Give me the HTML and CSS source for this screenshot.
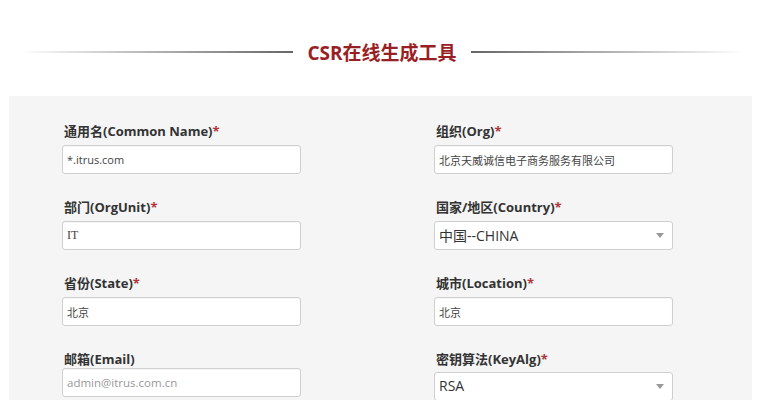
FILE: index.html
```html
<!DOCTYPE html>
<html lang="zh-CN">
<head>
<meta charset="utf-8">
<title>CSR在线生成工具</title>
<link rel="stylesheet" href="styles.css">
</head>
<body>
<header class="heading">
  <span class="rule rule-left"></span>
  <h1 class="title">CSR在线生成工具</h1>
  <span class="rule rule-right"></span>
</header>
<main class="panel">
  <form class="grid">
    <div class="field">
      <label class="label">通用名(Common Name)<span class="req">*</span></label>
      <input class="input" type="text" value="*.itrus.com">
    </div>
    <div class="field">
      <label class="label">组织(Org)<span class="req">*</span></label>
      <input class="input" type="text" value="北京天威诚信电子商务服务有限公司">
    </div>
    <div class="field">
      <label class="label">部门(OrgUnit)<span class="req">*</span></label>
      <input class="input input-serif" type="text" value="IT">
    </div>
    <div class="field">
      <label class="label">国家/地区(Country)<span class="req">*</span></label>
      <div class="select"><span class="select-value">中国--CHINA</span><span class="caret"></span></div>
    </div>
    <div class="field">
      <label class="label">省份(State)<span class="req">*</span></label>
      <input class="input" type="text" value="北京">
    </div>
    <div class="field">
      <label class="label">城市(Location)<span class="req">*</span></label>
      <input class="input" type="text" value="北京">
    </div>
    <div class="field">
      <label class="label label-tight">邮箱(Email)</label>
      <input class="input" type="text" placeholder="admin@itrus.com.cn">
    </div>
    <div class="field">
      <label class="label label-loose">密钥算法(KeyAlg)<span class="req">*</span></label>
      <div class="select"><span class="select-value">RSA</span><span class="caret"></span></div>
    </div>
  </form>
</main>
</body>
</html>
```
FILE: styles.css
```css
* { box-sizing: border-box; }
html, body { margin: 0; padding: 0; background: #fff; }
body {
  font-family: "Open Sans", "Noto Sans CJK SC", sans-serif;
  color: #333;
}
.heading {
  height: 96px;
  display: flex;
  align-items: center;
  padding: 0 14px 0 20px;
  gap: 14px;
}
.rule {
  flex: 1;
  height: 2px;
  margin-top: 8px;
}
.rule-left { background: linear-gradient(to right, rgba(120,120,120,0) 0%, rgba(150,150,150,0.6) 40%, #666 100%); }
.rule-right { background: linear-gradient(to left, rgba(120,120,120,0) 0%, rgba(150,150,150,0.6) 40%, #666 100%); }
.title {
  margin: 8px 0 0;
  font-size: 19px;
  font-weight: 700;
  color: #9a1f25;
  white-space: nowrap;
}
.panel {
  margin: 0 6px 0 9px;
  background: #f5f5f5;
  padding: 26px 79px 30px 53px;
  min-height: 320px;
}
.grid {
  display: grid;
  grid-template-columns: 239px 239px;
  column-gap: 133px;
  row-gap: 24px;
}
.field { display: flex; flex-direction: column; }
.label {
  height: 18px;
  line-height: 18px;
  font-size: 13px;
  font-weight: 700;
  color: #333;
  padding-left: 2px;
  margin-bottom: 5px;
}
.label-tight { margin-bottom: 0; }
.label-loose { margin-bottom: 4px; }
.req { color: #b0343a; font-weight: 700; }
.input {
  height: 29px;
  border: 1px solid #cfcfcf;
  border-radius: 3px;
  background: #fff;
  padding: 0 4px;
  font-family: "Open Sans", "Noto Sans CJK SC", sans-serif;
  font-size: 11px;
  color: #444;
  box-shadow: inset 0 1px 1px rgba(0,0,0,0.04);
  outline: none;
}
.input::placeholder { color: #999; font-size: 11.5px; }
.input-serif { font-family: "Liberation Serif", "Noto Sans CJK SC", serif; font-size: 12px; }
.select {
  height: 29px;
  border: 1px solid #cfcfcf;
  border-radius: 3px;
  background: #fff;
  display: flex;
  align-items: center;
  justify-content: space-between;
  padding: 0 8px 0 4px;
}
.select-value { font-size: 14px; color: #333; margin-top: -2px; }
.caret {
  width: 0; height: 0;
  border-left: 4px solid transparent;
  border-right: 4px solid transparent;
  border-top: 5px solid #999;
}
```
